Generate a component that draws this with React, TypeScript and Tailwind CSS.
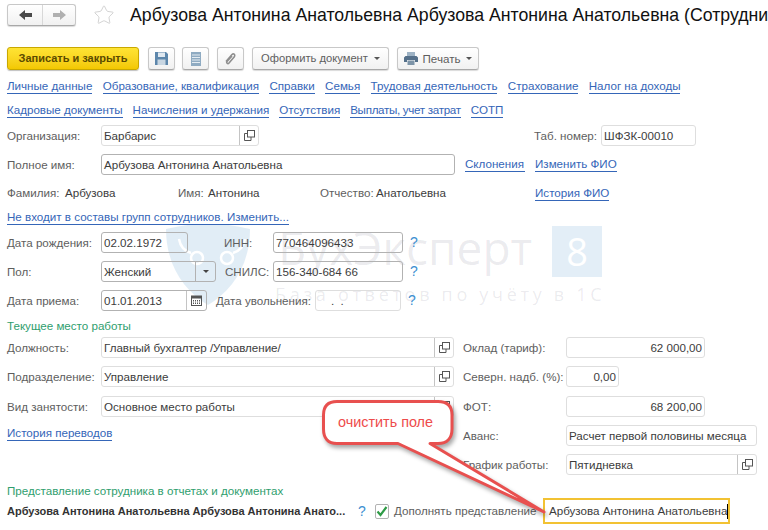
import React from 'react'
import { Star } from 'lucide-react'

const OpenIcon = () => (
  <svg width="11" height="11" viewBox="0 0 11 11" fill="none" stroke="#555" strokeWidth="1">
    <rect x="3.5" y="0.5" width="7" height="6.5" />
    <path d="M3.5 3.5H0.5V10.5H7V7" />
  </svg>
)

const Caret = () => <span className="inline-block ml-[6px] border-x-[3px] border-t-[3px] border-x-transparent border-t-[#555]" />

interface FieldProps {
  className: string
  value?: string
  dark?: boolean
  right?: boolean
  action?: boolean
  children?: React.ReactNode
}

// obychnoe pole vvoda 1C
const Field: React.FC<FieldProps> = ({ className, value, dark, right, action, children }) => (
  <div className={`flex items-stretch h-[21px] shrink-0 rounded-[3px] border ${dark ? 'border-[#b2b2b2]' : 'border-[#dedede]'} ${className}`}>
    <div className={`flex-1 flex items-center px-[2px] text-[#3c3c3c] whitespace-nowrap overflow-hidden ${right ? 'justify-end' : ''}`}>{value}</div>
    {action && <div className="w-[19px] flex items-center justify-center border-l border-[#c4c4c4]"><OpenIcon /></div>}
    {children}
  </div>
)

const Label: React.FC<{ className?: string; children: React.ReactNode }> = ({ className = '', children }) => (
  <div className={`shrink-0 text-[#5e5e5e] whitespace-nowrap ${className}`}>{children}</div>
)

const Lnk: React.FC<{ className?: string; children: React.ReactNode }> = ({ className = '', children }) => (
  <span className={`text-[#3566b8] border-b border-[#3566b8] leading-[14px] whitespace-nowrap ${className}`}>{children}</span>
)

const Help: React.FC<{ className?: string }> = ({ className = '' }) => (
  <span className={`inline-block w-[8px] text-[#3d8fd1] text-[14px] ${className}`}>?</span>
)

const ToolBtn: React.FC<{ className?: string; children: React.ReactNode }> = ({ className = '', children }) => (
  <div className={`h-[23px] flex items-center justify-center shrink-0 rounded-[3px] border border-[#c8c8c8] border-b-[#a8a8a8] bg-gradient-to-b from-white to-[#f1f1f1] shadow-[0_1px_1px_rgba(0,0,0,0.15)] text-[#5e5e5e] ${className}`}>
    {children}
  </div>
)

export default function App() {
  return (
    <div className="relative w-[768px] h-[530px] overflow-hidden bg-white text-[11.6px] font-['Liberation_Sans',Arial,sans-serif]">
      {/* Watermark */}
      <div className="absolute inset-0 pointer-events-none">
        <svg className="absolute left-[166px] top-[225px]" width="84" height="80" viewBox="0 0 84 80">
          <path d="M0 4C28-3 56-3 84 4C84 40 66 66 42 80C18 66 0 40 0 4Z" fill="#1b75bb" fillOpacity="0.13" />
          <circle cx="31" cy="33" r="6" fill="none" stroke="#fff" strokeWidth="2.5" />
          <circle cx="61" cy="33" r="6" fill="none" stroke="#fff" strokeWidth="2.5" />
          <path d="M25 28C18 26 14 20 13 14M67 28C74 26 78 20 79 14" fill="none" stroke="#fff" strokeWidth="2.5" />
        </svg>
        <div className="absolute left-[278px] top-[219px] text-[46px] leading-[56px] text-[#3a3a5a]/10 font-['Open_Sans',sans-serif] whitespace-nowrap">БухЭксперт</div>
        <div className="absolute left-[552px] top-[226px] w-[50px] h-[51px] flex items-center justify-center bg-[#1b75bb]/12 text-white text-[38px] font-['Open_Sans',sans-serif]">8</div>
        <div className="absolute left-[275px] top-[284px] text-[18px] leading-[20px] tracking-[3.7px] text-[#3a3a5a]/10 font-['Open_Sans',sans-serif] whitespace-nowrap">База ответов по учёту в 1С</div>
      </div>

      <div className="relative pl-[7px] pt-[4px]">
        {/* Title */}
        <div className="flex items-center h-[22px]">
          <div className="flex h-[22px] w-[69px] shrink-0 rounded-[3px] border border-[#c8c8c8] border-b-[#a8a8a8] bg-gradient-to-b from-white to-[#f1f1f1] shadow-[0_1px_1px_rgba(0,0,0,0.15)]">
            <div className="w-[35px] flex items-center justify-center border-r border-[#d8d8d8]">
              <svg width="13" height="10" viewBox="0 0 13 10"><path d="M0 5L6 0V3H13V7H6V10Z" fill="#4a4a4a" /></svg>
            </div>
            <div className="flex-1 flex items-center justify-center">
              <svg width="13" height="10" viewBox="0 0 13 10"><path d="M13 5L7 0V3H0V7H7V10Z" fill="#b0b0b0" /></svg>
            </div>
          </div>
          <Star size={22} strokeWidth={1} className="ml-[17px] shrink-0 text-[#cfcfcf]" />
          <div className="ml-[15px] text-[17.7px] text-[#111] whitespace-nowrap">Арбузова Антонина Анатольевна Арбузова Антонина Анатольевна (Сотрудник)</div>
        </div>

        {/* Toolbar */}
        <div className="flex items-center mt-[21px] h-[23px]">
          <div className="w-[132px] h-[23px] flex items-center justify-center shrink-0 rounded-[3px] border border-[#c9a800] bg-gradient-to-b from-[#ffe433] to-[#f3c800] shadow-[0_1px_1px_rgba(0,0,0,0.25)] text-[11px] text-[#5a4a00] font-bold">Записать и закрыть</div>
          <ToolBtn className="w-[27px] ml-[9px]">
            <svg width="13" height="13" viewBox="0 0 13 13"><path d="M0 0H11L13 2V13H0Z" fill="#5c86ab" /><rect x="3" y="0.5" width="7" height="4.5" fill="#dfe8f0" /><rect x="2.5" y="7.5" width="8" height="5.5" fill="#c8d6e2" /></svg>
          </ToolBtn>
          <ToolBtn className="w-[27px] ml-[7px]">
            <svg width="10" height="14" viewBox="0 0 10 14"><rect width="10" height="14" fill="#8fabc2" /><path d="M1 3H9M1 5.5H9M1 8H9M1 10.5H9" stroke="#e4ecf2" /></svg>
          </ToolBtn>
          <ToolBtn className="w-[27px] ml-[8px]">
            <svg width="13" height="14" viewBox="0 0 13 14" fill="none" stroke="#8e8e8e" strokeWidth="1.6"><path d="M2 9.5L8 2.5C9.5 1 11.5 2.5 10.5 4.5L5 11C3.8 12.3 2 11 3 9.5L8 4" /></svg>
          </ToolBtn>
          <ToolBtn className="w-[137px] ml-[8px] text-[11.2px]">Оформить документ<Caret /></ToolBtn>
          <ToolBtn className="w-[82px] ml-[8px]">
            <svg width="14" height="13" viewBox="0 0 14 13" className="mr-[5px]"><rect x="3" y="0" width="8" height="4" fill="#9db2c4" /><path d="M1.5 4H12.5L14 5.5V10H11V8H3V10H0V5.5Z" fill="#55708a" /><rect x="3.5" y="8.5" width="7" height="4.5" fill="#7d94a8" /></svg>
            Печать<Caret />
          </ToolBtn>
        </div>

        {/* Tabs links */}
        <div className="flex items-center gap-[10.4px] mt-[8px] h-[16px]">
          <Lnk>Личные данные</Lnk>
          <Lnk>Образование, квалификация</Lnk>
          <Lnk>Справки</Lnk>
          <Lnk>Семья</Lnk>
          <Lnk>Трудовая деятельность</Lnk>
          <Lnk>Страхование</Lnk>
          <Lnk>Налог на доходы</Lnk>
        </div>
        <div className="flex items-center gap-[10px] mt-[8px] h-[16px]">
          <Lnk>Кадровые документы</Lnk>
          <Lnk>Начисления и удержания</Lnk>
          <Lnk>Отсутствия</Lnk>
          <Lnk className="tracking-[-0.3px]">Выплаты, учет затрат</Lnk>
          <Lnk>СОТП</Lnk>
        </div>

        {/* Organization */}
        <div className="flex items-center mt-[7px] h-[21px]">
          <Label className="w-[94px]">Организация:</Label>
          <Field className="w-[158px]" value="Барбарис" action />
          <Label className="ml-[275px] w-[67px]">Таб. номер:</Label>
          <Field className="w-[95px]" value="ШФЗК-00010" />
        </div>
        <div className="flex items-center mt-[8px] h-[21px]">
          <Label className="w-[94px]">Полное имя:</Label>
          <Field className="w-[354px]" value="Арбузова Антонина Анатольевна" dark />
          <Lnk className="ml-[10px] w-[60px]">Склонения</Lnk>
          <Lnk className="ml-[10px]">Изменить ФИО</Lnk>
        </div>
        <div className="flex items-center mt-[8px] h-[20px]">
          <Label className="w-[58px]">Фамилия:</Label>
          <div className="w-[113px] text-[#3c3c3c]">Арбузова</div>
          <Label className="w-[30px]">Имя:</Label>
          <div className="w-[112px] text-[#3c3c3c]">Антонина</div>
          <Label className="w-[56px]">Отчество:</Label>
          <div className="w-[159px] text-[#3c3c3c]">Анатольевна</div>
          <Lnk>История ФИО</Lnk>
        </div>
        <div className="flex items-center mt-[6px] h-[16px]">
          <Lnk>Не входит в составы групп сотрудников. Изменить...</Lnk>
        </div>

        {/* Personal */}
        <div className="flex items-center mt-[7px] h-[21px]">
          <Label className="w-[94px]">Дата рождения:</Label>
          <Field className="w-[87px]" value="02.02.1972" dark />
          <Label className="ml-[36px] w-[49px]">ИНН:</Label>
          <Field className="w-[130px]" value="770464096433" dark />
          <Help className="ml-[7px]" />
        </div>
        <div className="flex items-center mt-[8px] h-[21px]">
          <Label className="w-[94px]">Пол:</Label>
          <Field className="w-[115px]" value="Женский" dark>
            <div className="w-[20px] flex items-center justify-center border-l border-[#b2b2b2]">
              <span className="border-x-[3px] border-t-[3px] border-x-transparent border-t-[#444]" />
            </div>
          </Field>
          <Label className="ml-[9px] w-[48px]">СНИЛС:</Label>
          <Field className="w-[130px]" value="156-340-684 66" dark />
          <Help className="ml-[7px]" />
        </div>
        <div className="flex items-center mt-[8px] h-[21px]">
          <Label className="w-[94px]">Дата приема:</Label>
          <Field className="w-[106px]" value="01.01.2013" dark>
            <div className="w-[20px] flex items-center justify-center border-l border-[#c4c4c4]">
              <svg width="11" height="11" viewBox="0 0 11 11"><rect x="0.5" y="1" width="10" height="9.5" fill="none" stroke="#555" /><rect x="0.5" y="1" width="10" height="2.5" fill="#555" /><path d="M2 5.5H9M2 7H9M2 8.5H9" stroke="#555" strokeDasharray="1 1" /></svg>
            </div>
          </Field>
          <Label className="ml-[9px] w-[99px]">Дата увольнения:</Label>
          <Field className="w-[86px]" value={'\u00a0\u00a0\u00a0\u00a0.\u00a0\u00a0.'} />
          <Help className="ml-[7px]" />
        </div>

        {/* Current job */}
        <div className="mt-[7px] h-[16px] flex items-center text-[#2f9e6e]">Текущее место работы</div>
        <div className="flex mt-[3px]">
          <div className="w-[456px] shrink-0">
            <div className="flex items-center h-[21px]">
              <Label className="w-[94px]">Должность:</Label>
              <Field className="w-[353px]" value="Главный бухгалтер /Управление/" action />
            </div>
            <div className="flex items-center mt-[8px] h-[21px]">
              <Label className="w-[94px]">Подразделение:</Label>
              <Field className="w-[353px]" value="Управление" action />
            </div>
            <div className="flex items-center mt-[9px] h-[21px]">
              <Label className="w-[94px]">Вид занятости:</Label>
              <Field className="w-[353px]" value="Основное место работы" action />
            </div>
            <div className="flex items-center mt-[8px] h-[16px]">
              <Lnk>История переводов</Lnk>
            </div>
          </div>
          <div className="flex-1">
            <div className="flex items-center h-[21px]">
              <Label className="w-[103px]">Оклад (тариф):</Label>
              <Field className="w-[139px]" value="62 000,00" right />
            </div>
            <div className="flex items-center mt-[8px] h-[21px]">
              <Label className="w-[103px]">Северн. надб. (%):</Label>
              <Field className="w-[53px]" value="0,00" right />
            </div>
            <div className="flex items-center mt-[9px] h-[21px]">
              <Label className="w-[103px]">ФОТ:</Label>
              <Field className="w-[139px]" value="68 200,00" right />
            </div>
            <div className="flex items-center mt-[8px] h-[21px]">
              <Label className="w-[103px]">Аванс:</Label>
              <Field className="w-[191px]" value="Расчет первой половины месяца" />
            </div>
            <div className="flex items-center mt-[8px] h-[21px]">
              <Label className="w-[103px]">График работы:</Label>
              <Field className="w-[191px]" value="Пятидневка" action />
            </div>
          </div>
        </div>

        {/* Presentation */}
        <div className="mt-[9px] h-[14px] flex items-center text-[#2f9e6e]">Представление сотрудника в отчетах и документах</div>
        <div className="flex items-center h-[26px]">
          <div className="w-[345px] shrink-0 text-[11px] font-bold text-[#333] whitespace-nowrap">Арбузова Антонина Анатольевна Арбузова Антонина Анато...</div>
          <Help className="ml-[6px]" />
          <div className="ml-[9px] w-[14px] h-[15px] shrink-0 flex items-center justify-center rounded-[2px] border border-[#b2b2b2]">
            <svg width="12" height="11" viewBox="0 0 12 11" fill="none" stroke="#2e9b46" strokeWidth="2.2"><path d="M1.5 5.5L4.5 9L10.5 1" /></svg>
          </div>
          <Label className="ml-[5px] w-[149px]">Дополнять представление</Label>
          <div className="w-[187px] h-[26px] shrink-0 flex items-center pl-[4px] border-2 border-[#f2c233] text-[#3c3c3c] whitespace-nowrap">
            Арбузова Антонина Анатольевна<span className="w-px h-[15px] bg-black" />
          </div>
        </div>
      </div>

      {/* Callout */}
      <svg className="absolute left-[310px] top-[390px] pointer-events-none drop-shadow-[2px_3px_2px_rgba(0,0,0,0.35)]" width="250" height="130" viewBox="0 0 250 130">
        <path
          d="M27 11.5H128C137 11.5 142 16 142 25V39C142 48 137 53.5 128 53.5H120L234 122L88 53.5H27C18 53.5 13.5 48 13.5 39V25C13.5 16 18 11.5 27 11.5Z"
          fill="#fff"
          stroke="#e8504f"
          strokeWidth="3"
          strokeLinejoin="round"
        />
      </svg>
      <div className="absolute left-[338px] top-[413px] text-[14.4px] leading-[18px] text-[#ee4b4b] whitespace-nowrap">очистить поле</div>
    </div>
  )
}
